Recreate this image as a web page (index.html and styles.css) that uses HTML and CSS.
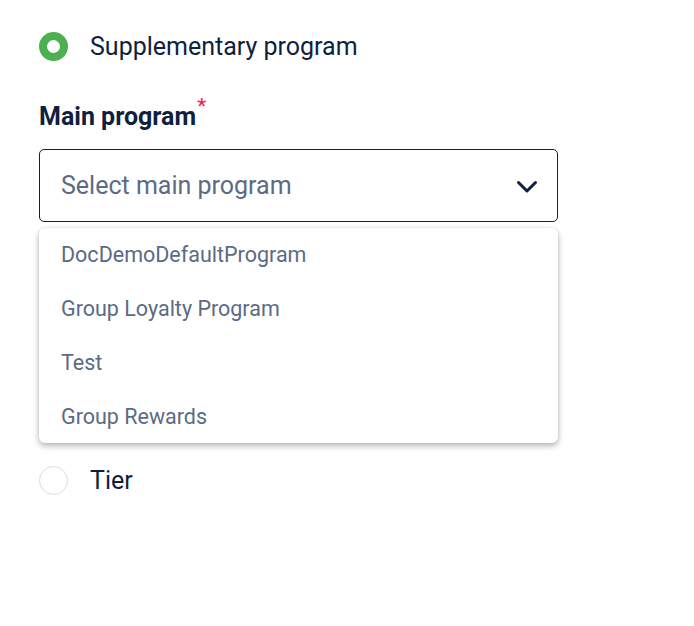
FILE: index.html
```html
<!DOCTYPE html>
<html>
<head>
<meta charset="utf-8">
<link rel="stylesheet" href="styles.css">
</head>
<body>
<div class="form">
  <label class="radio-row first">
    <span class="radio checked"></span>
    <span class="radio-label">Supplementary program</span>
  </label>

  <div class="field-label">Main program<span class="req">*</span></div>

  <div class="select-wrap">
    <div class="select">
      <span class="placeholder">Select main program</span>
      <svg class="chevron" width="22" height="14" viewBox="0 0 22 14"><path d="M2.5 2.5 L11 11 L19.5 2.5" fill="none" stroke="#0f1f3d" stroke-width="3" stroke-linecap="round" stroke-linejoin="round"/></svg>
    </div>
    <ul class="menu">
      <li>DocDemoDefaultProgram</li>
      <li>Group Loyalty Program</li>
      <li>Test</li>
      <li>Group Rewards</li>
    </ul>
  </div>

  <div class="hidden-space"></div>

  <label class="radio-row">
    <span class="radio"></span>
    <span class="radio-label">Tier</span>
  </label>
</div>
</body>
</html>
```

FILE: styles.css
```css
html, body {
  margin: 0;
  padding: 0;
  background: #ffffff;
}

body {
  font-family: Roboto, "Liberation Sans", sans-serif;
  color: #0f1f3d;
}

.form {
  padding: 32px 0 0 39px;
  width: 519px;
}

.radio-row {
  display: flex;
  align-items: center;
  gap: 22px;
  height: 29px;
}

.radio {
  box-sizing: border-box;
  width: 29px;
  height: 29px;
  border-radius: 50%;
  border: 1px solid #dcdcdc;
  background: #fff;
  flex: none;
}

.radio.checked {
  border: 8.5px solid #4caf50;
}

.radio-label {
  font-size: 25px;
  line-height: 29px;
  color: #0f1f3d;
}

.field-label {
  margin-top: 42px;
  font-size: 25px;
  font-weight: 700;
  color: #0f1f3d;
  line-height: 28px;
  height: 28px;
}

.req {
  color: #f0233c;
  font-weight: 400;
  font-size: 21px;
  position: relative;
  top: -12px;
  margin-left: 1px;
}

.select-wrap {
  position: relative;
  margin-top: 18px;
}

.select {
  box-sizing: border-box;
  height: 73px;
  border: 1px solid #0f1f3d;
  border-radius: 5px;
  display: flex;
  align-items: center;
  justify-content: space-between;
  padding: 0 19px 0 21px;
}

.placeholder {
  font-size: 25px;
  color: #5b6b84;
}

.chevron {
  display: block;
  margin-top: 2px;
}

.menu {
  position: absolute;
  top: 79px;
  left: 0;
  right: 0;
  margin: 0;
  padding: 0;
  list-style: none;
  background: #fff;
  border-radius: 6px;
  box-shadow: 0 3px 6px rgba(0, 0, 0, 0.28), 0 0 3px rgba(0, 0, 0, 0.10);
  height: 215px;
  box-sizing: border-box;
}

.menu li {
  height: 54px;
  line-height: 54px;
  padding-left: 22px;
  font-size: 21.5px;
  color: #5b6b84;
}

.hidden-space {
  height: 244px;
}
```
